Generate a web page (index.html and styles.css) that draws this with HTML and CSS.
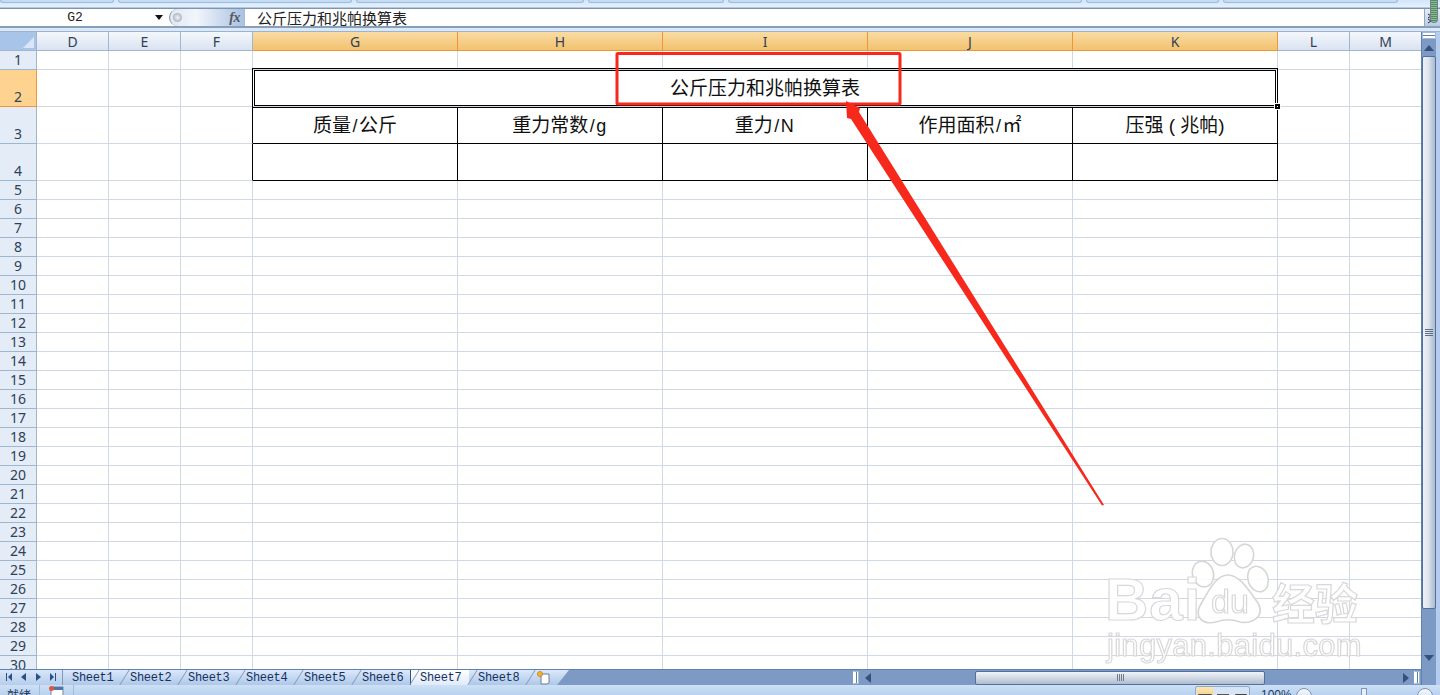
FILE: index.html
```html
<!DOCTYPE html>
<html lang="zh-CN">
<head>
<meta charset="utf-8">
<title>公斤压力和兆帕换算表</title>
<link rel="stylesheet" href="styles.css">
</head>
<body>
<div class="app">
  <div class="ribbon">
    <div class="rgroup g1"></div><div class="rgroup g2"></div><div class="rgroup g3"></div><div class="rgroup g4"></div><div class="rgroup g5"></div><div class="rgroup g6"></div><div class="rgroup g7"></div>
    <div class="stripes"></div>
  </div>
  <div class="formula">
    <div class="namebox"><span class="cellname">G2</span><svg class="drop" width="8" height="5" viewBox="0 0 8 5"><path d="M0 0H8L4 5Z"/></svg></div>
    <div class="fxpill"><span class="knob"></span><span class="fx">fx</span></div>
    <div class="finput">公斤压力和兆帕换算表</div>
    <div class="expand"><svg width="10" height="12" viewBox="0 0 10 12"><path d="M1 2L4 4L1 6M1 7L4 9L1 11" fill="none" stroke="#222" stroke-width="1"/></svg></div>
  </div>
  <div class="strip"></div>
  <div class="workspace">
    <div class="left">
      <div class="sheet">
        <table class="grid">
          <colgroup><col class="c-r"><col class="c-n"><col class="c-n"><col class="c-n"><col class="c-w"><col class="c-w"><col class="c-w"><col class="c-w"><col class="c-w"><col class="c-n"><col class="c-n"></colgroup>
          <tr class="hd"><th class="corner"><span class="tri"></span></th><th class="ch">D</th><th class="ch">E</th><th class="ch">F</th><th class="ch on">G</th><th class="ch on">H</th><th class="ch on">I</th><th class="ch on">J</th><th class="ch on">K</th><th class="ch">L</th><th class="ch">M</th></tr>
          <tr><th class="rh">1</th><td></td><td></td><td></td><td></td><td></td><td></td><td></td><td></td><td></td><td></td></tr>
          <tr class="tall"><th class="rh on">2</th><td></td><td></td><td></td><td class="title" colspan="5"><div class="dbl"></div><span class="handle"></span>公斤压力和兆帕换算表</td><td></td><td></td></tr>
          <tr class="tall"><th class="rh">3</th><td></td><td></td><td class="bk-r"></td><td class="bk">质量<span class="lat">/</span>公斤</td><td class="bk">重力常数<span class="lat">/g</span></td><td class="bk">重力<span class="lat">/N</span></td><td class="bk">作用面积<span class="lat">/</span>㎡</td><td class="bk">压强 ( 兆帕)</td><td></td><td></td></tr>
          <tr class="tall"><th class="rh">4</th><td></td><td></td><td class="bk-r"></td><td class="bk"></td><td class="bk"></td><td class="bk"></td><td class="bk"></td><td class="bk"></td><td></td><td></td></tr>
          <tr><th class="rh">5</th><td></td><td></td><td></td><td></td><td></td><td></td><td></td><td></td><td></td><td></td></tr>
          <tr><th class="rh">6</th><td></td><td></td><td></td><td></td><td></td><td></td><td></td><td></td><td></td><td></td></tr>
          <tr><th class="rh">7</th><td></td><td></td><td></td><td></td><td></td><td></td><td></td><td></td><td></td><td></td></tr>
          <tr><th class="rh">8</th><td></td><td></td><td></td><td></td><td></td><td></td><td></td><td></td><td></td><td></td></tr>
          <tr><th class="rh">9</th><td></td><td></td><td></td><td></td><td></td><td></td><td></td><td></td><td></td><td></td></tr>
          <tr><th class="rh">10</th><td></td><td></td><td></td><td></td><td></td><td></td><td></td><td></td><td></td><td></td></tr>
          <tr><th class="rh">11</th><td></td><td></td><td></td><td></td><td></td><td></td><td></td><td></td><td></td><td></td></tr>
          <tr><th class="rh">12</th><td></td><td></td><td></td><td></td><td></td><td></td><td></td><td></td><td></td><td></td></tr>
          <tr><th class="rh">13</th><td></td><td></td><td></td><td></td><td></td><td></td><td></td><td></td><td></td><td></td></tr>
          <tr><th class="rh">14</th><td></td><td></td><td></td><td></td><td></td><td></td><td></td><td></td><td></td><td></td></tr>
          <tr><th class="rh">15</th><td></td><td></td><td></td><td></td><td></td><td></td><td></td><td></td><td></td><td></td></tr>
          <tr><th class="rh">16</th><td></td><td></td><td></td><td></td><td></td><td></td><td></td><td></td><td></td><td></td></tr>
          <tr><th class="rh">17</th><td></td><td></td><td></td><td></td><td></td><td></td><td></td><td></td><td></td><td></td></tr>
          <tr><th class="rh">18</th><td></td><td></td><td></td><td></td><td></td><td></td><td></td><td></td><td></td><td></td></tr>
          <tr><th class="rh">19</th><td></td><td></td><td></td><td></td><td></td><td></td><td></td><td></td><td></td><td></td></tr>
          <tr><th class="rh">20</th><td></td><td></td><td></td><td></td><td></td><td></td><td></td><td></td><td></td><td></td></tr>
          <tr><th class="rh">21</th><td></td><td></td><td></td><td></td><td></td><td></td><td></td><td></td><td></td><td></td></tr>
          <tr><th class="rh">22</th><td></td><td></td><td></td><td></td><td></td><td></td><td></td><td></td><td></td><td></td></tr>
          <tr><th class="rh">23</th><td></td><td></td><td></td><td></td><td></td><td></td><td></td><td></td><td></td><td></td></tr>
          <tr><th class="rh">24</th><td></td><td></td><td></td><td></td><td></td><td></td><td></td><td></td><td></td><td></td></tr>
          <tr><th class="rh">25</th><td></td><td></td><td></td><td></td><td></td><td></td><td></td><td></td><td></td><td></td></tr>
          <tr><th class="rh">26</th><td></td><td></td><td></td><td></td><td></td><td></td><td></td><td></td><td></td><td></td></tr>
          <tr><th class="rh">27</th><td></td><td></td><td></td><td></td><td></td><td></td><td></td><td></td><td></td><td></td></tr>
          <tr><th class="rh">28</th><td></td><td></td><td></td><td></td><td></td><td></td><td></td><td></td><td></td><td></td></tr>
          <tr><th class="rh">29</th><td></td><td></td><td></td><td></td><td></td><td></td><td></td><td></td><td></td><td></td></tr>
          <tr><th class="rh">30</th><td></td><td></td><td></td><td></td><td></td><td></td><td></td><td></td><td></td><td></td></tr>
        </table>
      </div>
      <div class="tabbar">
        <div class="nav">
          <svg width="62" height="14" viewBox="0 0 62 14"><g class="navi"><path d="M6 3H7V11H6ZM12 3V11L8 7Z"/><path d="M26 3V11L21 7Z"/><path d="M36 3V11L41 7Z"/><path d="M50 3L54 7L50 11ZM55 3H56V11H55Z"/></g></svg>
        </div>
        <div class="tabs">
          <div class="tab">Sheet1</div><div class="tab">Sheet2</div><div class="tab">Sheet3</div><div class="tab">Sheet4</div><div class="tab">Sheet5</div><div class="tab">Sheet6</div><div class="tab active">Sheet7</div><div class="tab">Sheet8</div>
          <div class="addtab"><svg width="16" height="14" viewBox="0 0 16 14"><path d="M5 3H13V12L11 13H5Z" fill="#fff" stroke="#6b7f99"/><circle cx="4" cy="3" r="2.6" fill="#f2b12f" stroke="#c8801a" stroke-width=".7"/></svg></div>
        </div>
        <div class="hscroll">
          <span class="split s1"></span>
          <svg class="harrow a1" width="6" height="10" viewBox="0 0 6 10"><path d="M6 0V10L0 5Z"/></svg>
          <div class="hthumb"><span class="hgrip"></span></div>
          <svg class="harrow a2" width="6" height="10" viewBox="0 0 6 10"><path d="M0 0V10L6 5Z"/></svg>
          <span class="split s2"></span>
        </div>
      </div>
    </div>
    <div class="vscroll">
      <div class="vtrack">
        <span class="vsplit"></span>
        <svg class="varrow up" width="10" height="6" viewBox="0 0 10 6"><path d="M0 6H10L5 0Z"/></svg>
        <div class="vthumb"><span class="vgrip"></span></div>
        <svg class="varrow down" width="10" height="6" viewBox="0 0 10 6"><path d="M0 0H10L5 6Z"/></svg>
      </div>
    </div>
  </div>
  <div class="status">
    <span class="ready">就绪</span>
    <span class="sep"></span>
    <svg class="macro" width="16" height="10" viewBox="0 0 16 10"><rect x="3" y="1" width="12" height="10" fill="#fff" stroke="#6d87a8"/><rect x="3" y="1" width="12" height="3" fill="#4d74b0"/><circle cx="3.5" cy="2.5" r="2.5" fill="#e4553a"/></svg>
    <span class="sep s-b"></span>
    <div class="views">
      <span class="vbtn vb-on"><svg width="14" height="9" viewBox="0 0 14 9"><path d="M.5.5H13.5V9M.5.5V9M5 .5V9M9.5.5V9M.5 3.5H13.5" fill="#fff" stroke="#4d4d4d"/></svg></span>
      <span class="vbtn"><svg width="14" height="9" viewBox="0 0 14 9"><rect x="1.5" y=".5" width="11" height="10" fill="#cfd6de" stroke="#555"/><rect x="4" y="3" width="6" height="8" fill="#fff" stroke="#777"/></svg></span>
      <span class="vbtn"><svg width="14" height="9" viewBox="0 0 14 9"><path d="M1.5.5H12.5V9H1.5ZM7 .5V9" fill="#fff" stroke="#444"/></svg></span>
    </div>
    <span class="zoomtxt">100%</span>
    <span class="zbtn z-minus"></span>
    <span class="ztick"></span>
    <span class="zbtn z-plus"></span>
  </div>
  <svg class="overlay" width="1440" height="695" viewBox="0 0 1440 695">
    <defs><filter id="soft" x="-5%" y="-5%" width="110%" height="110%"><feGaussianBlur stdDeviation=".45"/></filter></defs>
    <g class="wm" filter="url(#soft)">
      <ellipse cx="1222" cy="552" rx="11" ry="13.5"/>
      <ellipse cx="1244" cy="556" rx="9.5" ry="12" transform="rotate(15 1244 556)"/>
      <ellipse cx="1203" cy="574" rx="10.5" ry="13" transform="rotate(-15 1203 574)"/>
      <ellipse cx="1258" cy="579" rx="10" ry="13" transform="rotate(-20 1258 579)"/>
      <path d="M1228 575C1240 575 1250 592 1258 603C1266 618 1250 624 1240 622C1232 619 1224 619 1216 622C1204 625 1192 618 1202 602C1208 592 1216 575 1228 575Z"/>
      <text class="wm-bai" x="1105" y="620">Bai</text>
      <text class="wm-du" x="1211" y="613">du</text>
      <text class="wm-cn" x="1272" y="620">经验</text>
      <text class="wm-url" x="1107" y="656">jingyan.baidu.com</text>
    </g>
    <rect class="redbox" x="617" y="53.5" width="283" height="50.5" rx="1"/>
    <polygon class="arrow" points="846,101 860,108 859,112 1104,505 1102,505.5 851,119 847,118"/>
  </svg>
</div>
</body>
</html>
```

FILE: styles.css
```css
* { box-sizing: border-box; }
html, body { margin: 0; padding: 0; background: #fff; }
body { width: 1440px; height: 695px; overflow: hidden; font-family: "Liberation Sans", "Noto Sans CJK SC", sans-serif; }
.app { position: relative; width: 1440px; height: 695px; display: flex; flex-direction: column; overflow: hidden; }

/* ribbon remnant */
.ribbon { position: relative; height: 8px; flex: none; display: flex; gap: 4px; align-items: flex-start; background: linear-gradient(#d3e5f9, #e4f0fd); border-bottom: 1px solid #b0c8e4; }
.rgroup { height: 3px; background: #c6dcf4; border: 1px solid #9cbbdc; border-top: 0; border-radius: 0 0 4px 4px; }
.g1 { width: 114px; } .g2 { width: 234px; } .g3 { width: 228px; } .g4 { width: 136px; } .g5 { width: 354px; } .g6 { width: 133px; } .g7 { width: 175px; }
.stripes { position: absolute; right: 2px; top: 0; width: 8px; height: 23px; z-index: 3; border-radius: 0 0 4px 4px; background: repeating-linear-gradient(#4f8f5f 0 1px, #8fb89a 1px 2px); border: 1px solid #76808c; border-top: 0; }

/* formula bar */
.formula { height: 20px; flex: none; display: flex; background: #fff; border-top: 1px solid #7e95ad; border-bottom: 2px solid #86a0ba; }
.namebox { width: 169px; display: flex; align-items: center; position: relative; }
.cellname { width: 150px; text-align: center; font: 13px "Liberation Mono", monospace; color: #222; }
.drop { fill: #111; margin-left: 5px; }
.fxpill { width: 76px; position: relative; display: flex; align-items: center; justify-content: flex-end; padding-right: 4px; border-right: 1px solid #a9bdd3; border-radius: 10px 0 0 10px; border-left: 1px solid #7e95ad; background: linear-gradient(90deg, #dfe8f4, #f2f6fb 35%, #a9c1e2); }
.knob { position: absolute; left: 3px; top: 4px; width: 9px; height: 9px; border-radius: 50%; background: radial-gradient(#f4f4f4, #8f9cab); }
.fx { font: italic bold 14px "Liberation Serif", serif; color: #55595f; letter-spacing: -.5px; }
.finput { flex: 1; padding-left: 12px; font: 15px/17px "Noto Sans CJK SC", sans-serif; color: #222; }
.expand { width: 16px; display: flex; align-items: center; justify-content: flex-start; padding-left: 2px; background: linear-gradient(#e6eef8, #b8cbe4); border-left: 1px solid #8fa7c1; }
.strip { height: 4px; flex: none; background: #dbe8f8; border-bottom: 1px solid #9ab3d0; }

/* workspace */
.workspace { flex: 1; min-height: 0; display: flex; }
.left { width: 1421px; flex: none; display: flex; flex-direction: column; }
.sheet { height: 637px; flex: none; overflow: hidden; position: relative; background: #fff; }
.grid { table-layout: fixed; width: 1422px; border-collapse: separate; border-spacing: 0; }
.c-r { width: 37px; } .c-n { width: 72px; } .c-w { width: 205px; }
.grid tr { height: 19px; }
.grid tr.tall { height: 37px; }
.grid td { padding: 0; border-right: 1px solid #d0d7e5; border-bottom: 1px solid #d0d7e5; text-align: center; vertical-align: middle; font: 19px/27px "Liberation Sans", "Noto Sans CJK SC", sans-serif; color: #111; overflow: hidden; }
.grid td.bk { border-right-color: #000; border-bottom-color: #000; padding-top: 1px; }
.grid td.bk-r { border-right-color: #000; }
.grid td.title { position: relative; overflow: visible; border-right-color: transparent; }
.lat { font-size: 18px; letter-spacing: 1.5px; margin-left: 1.5px; }
.dbl { position: absolute; left: -1px; right: -1px; top: -2px; bottom: -2px; border: 3px double #000; pointer-events: none; }
.handle { position: absolute; right: -3px; bottom: -3px; width: 5px; height: 5px; background: #fff; border: 2px solid #000; outline: 1px solid #fff; z-index: 2; }

.grid th { padding: 0; font-weight: normal; font-family: "Noto Sans", sans-serif; font-size: 14px; line-height: 18px; color: #2f4057; }
.corner { position: relative; background: #a9c4e9; border-right: 1px solid #9eb6ce; border-bottom: 1px solid #9eb6ce; height: 19px; }
.tri { position: absolute; right: 2px; bottom: 2px; width: 0; height: 0; border-left: 11px solid transparent; border-bottom: 11px solid #d9e6f7; }
.ch { background: linear-gradient(#f4f7fc, #d9e3f1); border-right: 1px solid #9eb6ce; border-bottom: 1px solid #9eb6ce; height: 19px; line-height: 17px !important; }
.ch.on { background: linear-gradient(#f9dca3, #f2c26f); border-right-color: #f29536; border-bottom-color: #f29536; }
.rh { background: #e4ecf7; border-right: 1px solid #9eb6ce; border-bottom: 1px solid #9eb6ce; vertical-align: bottom; text-align: center; }
.rh.on { background: #fdd38f; border-right-color: #f29536; border-bottom-color: #f29536; }

/* tabs + horizontal scroll */
.tabbar { height: 16px; flex: none; display: flex; background: #7c9ac3; border-top: 1px solid #5f82b0; }
.nav { width: 63px; flex: none; background: linear-gradient(#d8e6f8, #b6cdea); border-right: 1px solid #7e99bd; }
.navi { fill: #27508c; }
.tabs { width: 506px; flex: none; display: flex; background: linear-gradient(#dbe8f9, #aec8e9); clip-path: polygon(0 0, 100% 0, calc(100% - 12px) 100%, 0 100%); }
.tab { width: 58px; flex: none; position: relative; padding-left: 9px; font: 12px/16px "Liberation Mono", monospace; letter-spacing: -.3px; color: #15315e; white-space: nowrap; }
.tab::after { content: ""; position: absolute; right: -4px; top: 0; bottom: 0; width: 1px; background: #7e99bd; transform: skewX(-32deg); z-index: 2; }
.tab.active { background: linear-gradient(#fff, #dfeafa); border-left: 1px solid #33527f; margin-left: -1px; width: 59px; }
.addtab { width: 30px; padding: 1px 0 0 9px; }
.hscroll { flex: 1; display: flex; align-items: center; padding-left: 284px; }
.split { width: 6px; height: 13px; flex: none; background: #fff; border: 1px solid #a3b9d6; border-left-color: #fff; box-shadow: inset 2px 0 0 #fff, inset 3px 0 0 #5f7fa8; }
.harrow { fill: #35507a; flex: none; }
.a1 { margin-left: 6px; }
.hthumb { width: 290px; height: 14px; flex: none; margin-left: 104px; display: flex; align-items: center; justify-content: center; border: 1px solid #51709c; border-radius: 2px; background: linear-gradient(#f0f3f8, #cdd6e2 55%, #aebccd); padding-left: 1px; }
.hgrip { width: 7px; height: 7px; background: repeating-linear-gradient(90deg, #6b7c90 0 1px, transparent 1px 2px); }
.a2 { margin-left: 138px; }
.s2 { margin-left: 5px; }

/* vertical scroll */
.vscroll { width: 19px; flex: none; height: 100%; background: #b4cdee; padding-right: 4px; }
.vtrack { height: 100%; background: #7c9ac3; display: flex; flex-direction: column; align-items: center; border-left: 1px solid #5f82b0; }
.vsplit { width: 14px; height: 7px; flex: none; background: #fff; border: 1px solid #a3b9d6; box-shadow: inset 0 2px 0 #fff, inset 0 3px 0 #5f7fa8; }
.varrow { fill: #35507a; flex: none; }
.up { margin-top: 6px; }
.vthumb { width: 14px; height: 553px; flex: none; margin-top: 5px; display: flex; align-items: center; justify-content: center; border: 1px solid #51709c; border-radius: 2px; background: linear-gradient(90deg, #eef1f6, #dfe5ed 45%, #c3cfde 70%, #aebccd); }
.vgrip { width: 8px; height: 7px; background: repeating-linear-gradient(#5f6e80 0 1px, transparent 1px 2px); }
.down { margin-top: 46px; }

/* status bar */
.status { height: 10px; flex: none; display: flex; align-items: flex-start; overflow: hidden; position: relative; background: linear-gradient(#cde0f6, #b9d2f0); }
.ready { margin: 3px 0 0 7px; width: 26px; font: 12px/14px "Noto Sans CJK SC", sans-serif; color: #1d3559; }
.sep { width: 1px; height: 10px; margin-left: 6px; background: #a4bcd9; flex: none; }
.macro { margin: 1px 0 0 8px; flex: none; }
.s-b { margin-left: 9px; }
.views { margin: 1px 0 0 1121px; width: 55px; height: 14px; flex: none; display: flex; gap: 2px; padding-left: 1px; background: #d6e4f6; border: 1px solid #91a9c6; border-radius: 2px; }
.vbtn { width: 16px; height: 14px; padding: 2px 0 0 1px; display: block; }
.vb-on { background: linear-gradient(#fce6b6, #f6c76f); }
.zoomtxt { margin: 3px 0 0 11px; width: 34px; font: 12px/14px "Liberation Sans", sans-serif; color: #22395c; flex: none; }
.zbtn { width: 16px; height: 16px; border-radius: 50%; border: 1px solid #7f95b4; background: linear-gradient(#f6f9fd, #c8d8ec); flex: none; margin-top: 3px; }
.z-minus { margin-left: 1px; }
.ztick { width: 6px; height: 10px; margin: 3px 0 0 49px; background: #e6eef9; border: 1px solid #7f95b4; flex: none; }
.z-plus { margin-left: 50px; }

/* annotations over the sheet */
.overlay { position: absolute; left: 0; top: 0; pointer-events: none; z-index: 5; }
.redbox { fill: none; stroke: #f7281c; stroke-width: 3; }
.arrow { fill: #f7281c; }
.wm ellipse, .wm path { fill: rgba(255,255,255,.9); stroke: #d6d6d6; stroke-width: 1.6; }
.wm text { fill: rgba(255,255,255,.9); stroke: #d8d8d8; stroke-width: 1.2; font-family: "Liberation Sans", sans-serif; }
.wm-bai { font-size: 60px; font-weight: bold; letter-spacing: 1px; }
.wm-du { font-size: 34px; }
.wm-cn { font-size: 43px; font-weight: bold; font-family: "Noto Sans CJK SC", sans-serif !important; }
.wm-url { font-size: 31px; letter-spacing: .3px; }
```
